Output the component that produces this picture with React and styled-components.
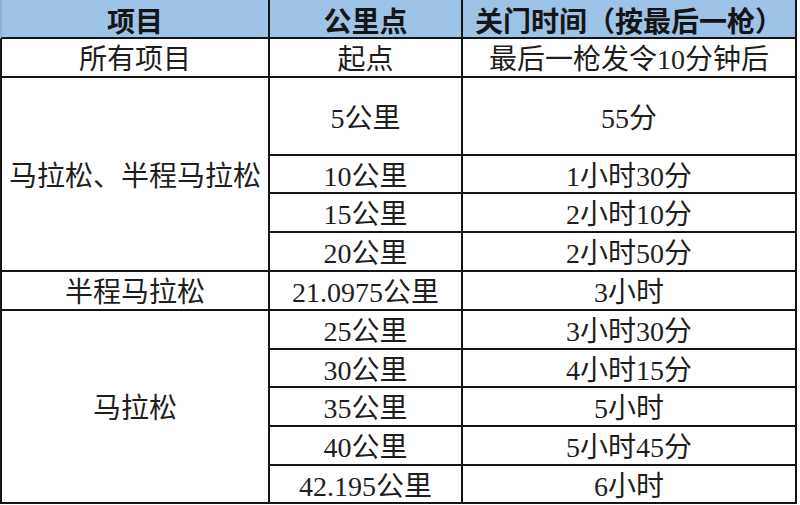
import React from "react";
import styled, { createGlobalStyle } from "styled-components";

const Global = createGlobalStyle`
  html, body { margin: 0; padding: 0; background: #ffffff; }
  body { width: 800px; height: 505px; overflow: hidden; }
`;

const Grid = styled.div`
  display: grid;
  grid-template-columns: 270px 193px 334px;
  grid-template-rows: 39px 39px 78px 38px 39px 39px 39px 39px 38px 39px 39px 38px;
  width: 797px;
  font-family: "Liberation Serif", "Noto Sans CJK SC", serif;
  color: #1e1e1e;
`;

const Cell = styled.div`
  box-sizing: border-box;
  display: flex;
  align-items: center;
  justify-content: center;
  font-size: 28px;
  line-height: 1;
  font-weight: 400;
  padding-top: ${(p) => (p.$head ? 3 : 5)}px;
  white-space: nowrap;
  border-right: 2px solid #151515;
  border-bottom: 2px solid #151515;
  border-left: ${(p) => (p.$first ? "2px solid #151515" : "none")};
  grid-row: ${(p) => p.$row || "auto"};
  grid-column: ${(p) => p.$col || "auto"};
`;

const HeadCell = styled(Cell)`
  background: #9dc3e6;
  font-family: "Noto Sans CJK SC", sans-serif;
  font-weight: 700;
  color: #151515;
  border-left: ${(p) => (p.$first ? "2px solid #8eb3d6" : "none")};
`;

const rows = [
  { km: "起点", time: "最后一枪发令10分钟后" },
  { km: "5公里", time: "55分" },
  { km: "10公里", time: "1小时30分" },
  { km: "15公里", time: "2小时10分" },
  { km: "20公里", time: "2小时50分" },
  { km: "21.0975公里", time: "3小时" },
  { km: "25公里", time: "3小时30分" },
  { km: "30公里", time: "4小时15分" },
  { km: "35公里", time: "5小时" },
  { km: "40公里", time: "5小时45分" },
  { km: "42.195公里", time: "6小时" },
];

const groups = [
  { label: "所有项目", row: "2 / 3" },
  { label: "马拉松、半程马拉松", row: "3 / 7" },
  { label: "半程马拉松", row: "7 / 8" },
  { label: "马拉松", row: "8 / 13" },
];

export default function App() {
  return (
    <>
      <Global />
      <Grid>
        <HeadCell $head $first $col="1" $row="1">项目</HeadCell>
        <HeadCell $head $col="2" $row="1">公里点</HeadCell>
        <HeadCell $head $col="3" $row="1">关门时间（按最后一枪）</HeadCell>
        {groups.map((g) => (
          <Cell key={g.label} $first $col="1" $row={g.row}>
            {g.label}
          </Cell>
        ))}
        {rows.map((r, i) => (
          <React.Fragment key={r.km}>
            <Cell $col="2" $row={`${i + 2}`}>{r.km}</Cell>
            <Cell $col="3" $row={`${i + 2}`}>{r.time}</Cell>
          </React.Fragment>
        ))}
      </Grid>
    </>
  );
}
